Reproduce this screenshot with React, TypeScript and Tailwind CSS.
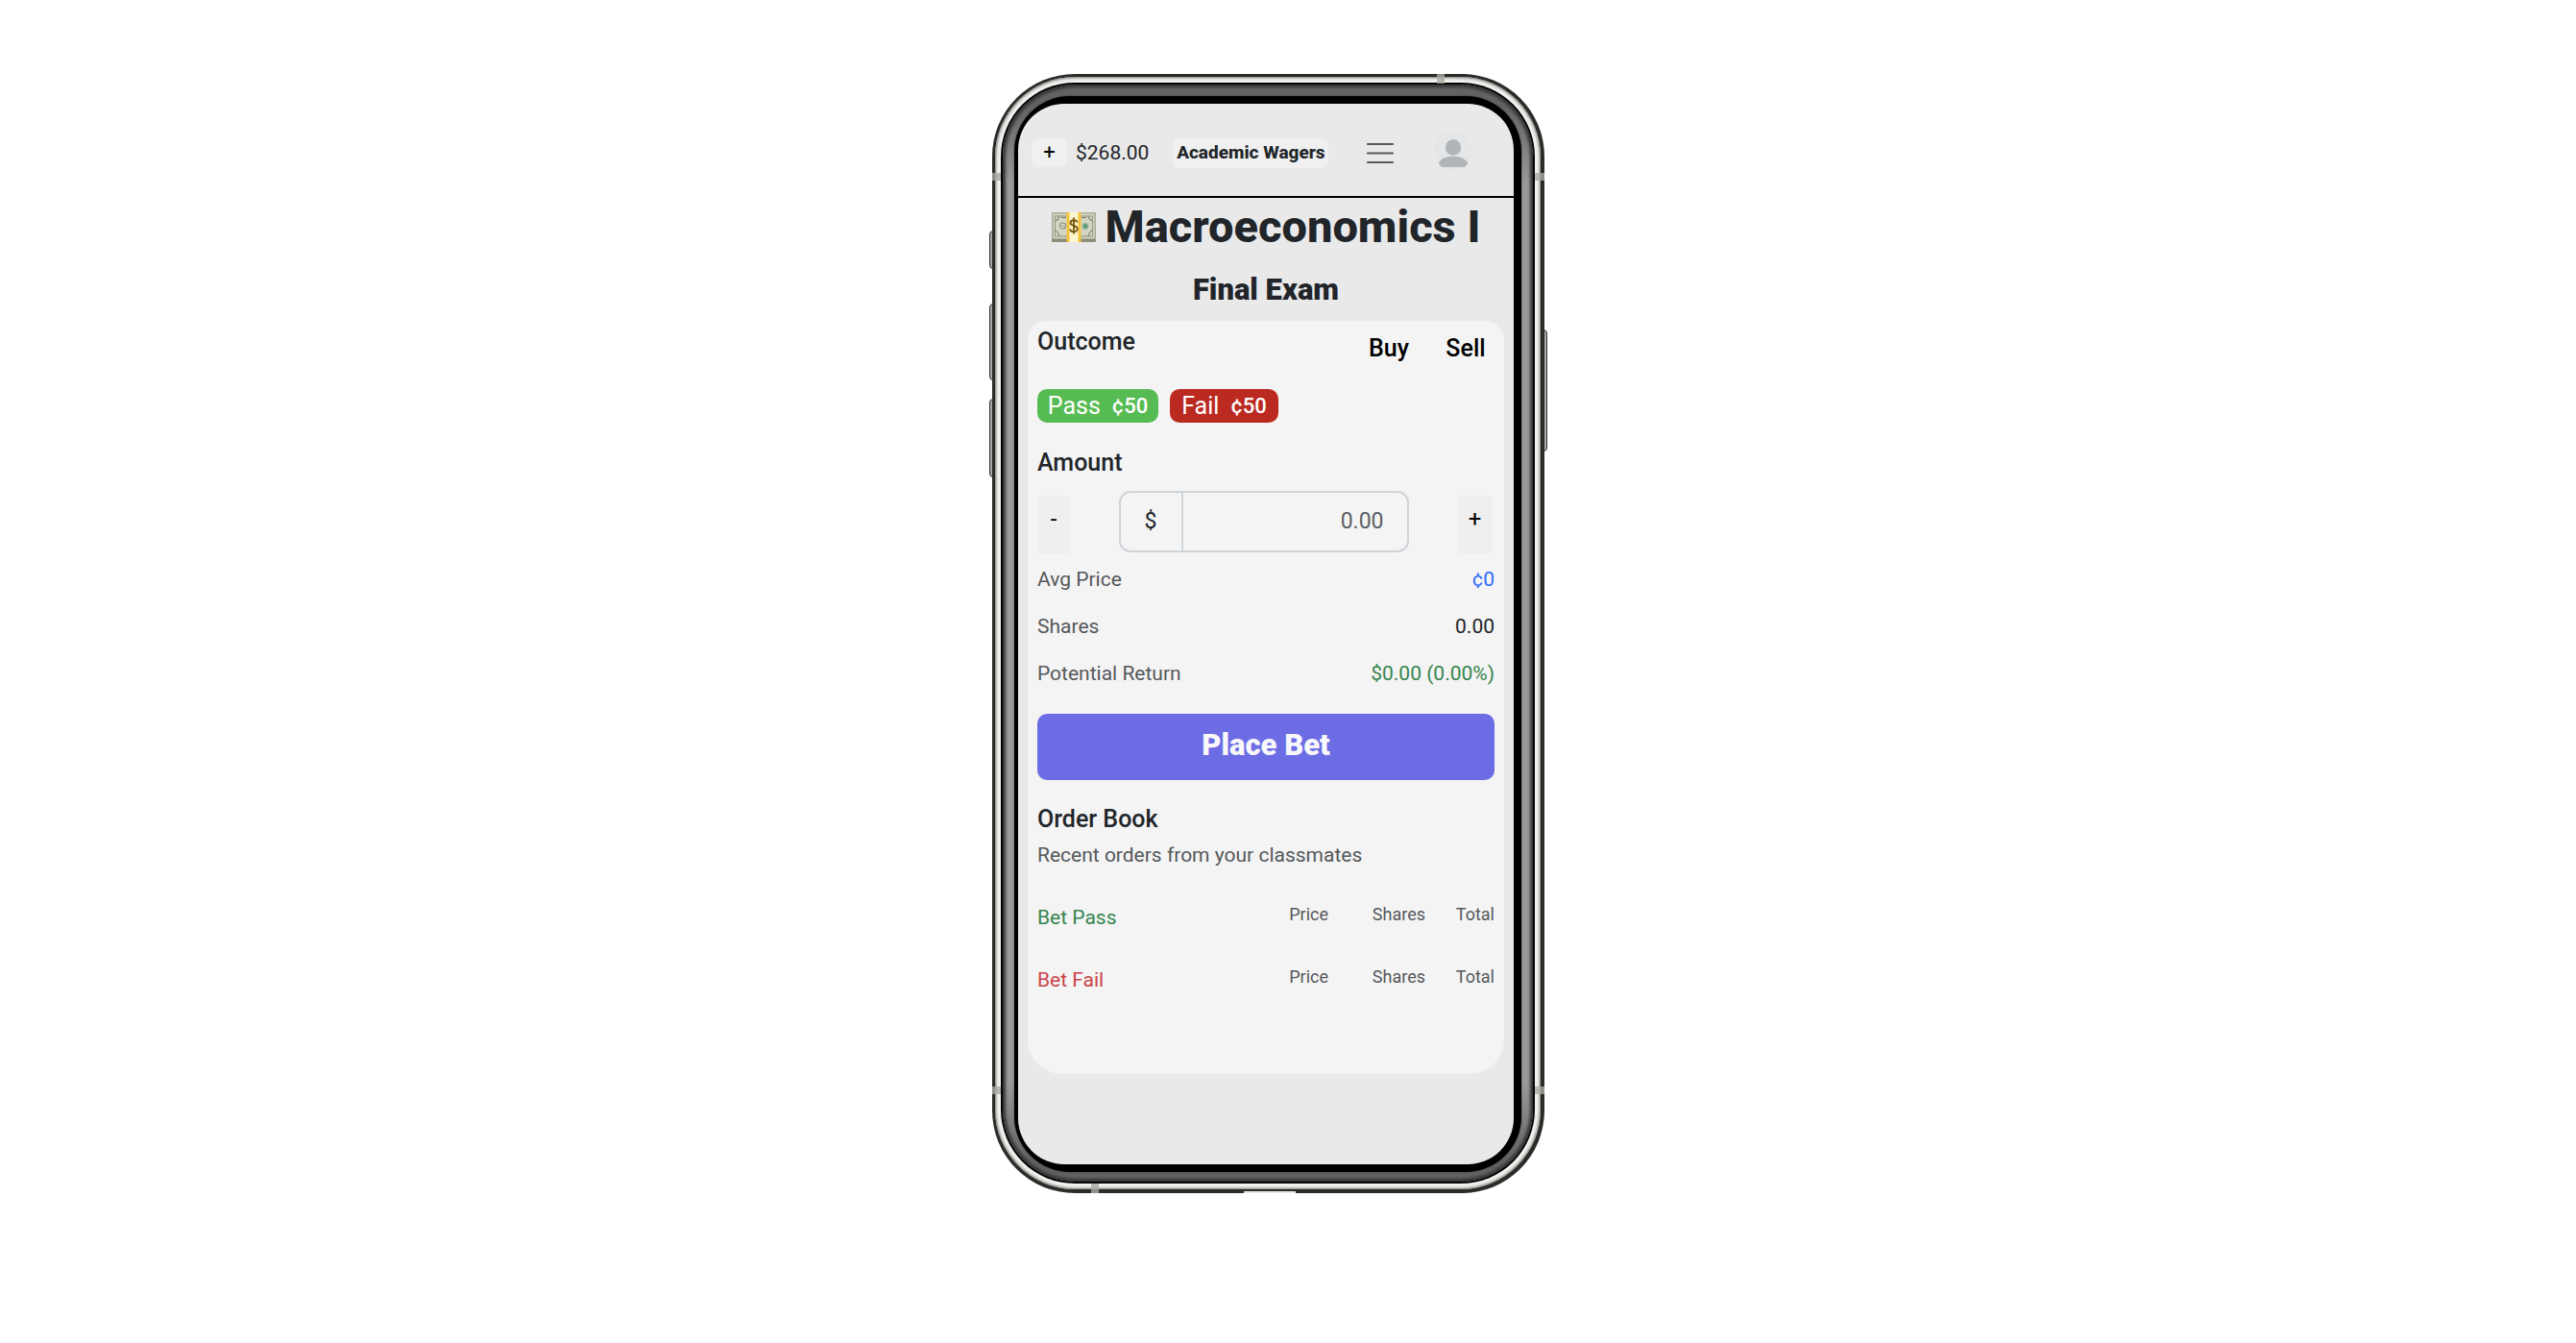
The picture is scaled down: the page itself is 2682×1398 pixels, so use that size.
import { useState } from "react";

function MoneyIcon() {
  return (
    <svg viewBox="0 0 46 31" className="h-[31px] w-[46px] shrink-0" aria-hidden="true">
      <rect x="0" y="2" width="46" height="29" rx="1" fill="#8b8d78" />
      <rect x="0" y="0" width="46" height="28" rx="1" fill="#a9aa98" />
      <rect x="1.5" y="1.5" width="43" height="25.500" fill="#d5d5c4" />
      <rect x="3.500" y="4" width="39" height="21" fill="none" stroke="#9b9d8b" strokeWidth="1.200" />
      <path d="M8 4 Q7 8 3.500 9 M8 25 Q7 20 3.500 19 M38 4 Q39 8 42.500 9 M38 25 Q39 20 42.500 19" fill="none" stroke="#85877a" strokeWidth="1.200" />
      <circle cx="11.500" cy="14" r="3" fill="#e4e4d8" stroke="#85877a" strokeWidth="1.200" />
      <circle cx="11.500" cy="14" r="1" fill="#85877a" />
      <circle cx="35" cy="14.500" r="3" fill="#5f9a79" stroke="#9fb9a4" strokeWidth="1.200" />
      <path d="M10 5.500 H15 M31 5.500 H36" stroke="#77796c" strokeWidth="1.200" />
      <rect x="15.500" y="0" width="15" height="31" fill="#f3c53c" />
      <rect x="18.500" y="0" width="9" height="31" fill="#fdf6cf" />
      <path d="M26.500 10.500 C26 7.500 19.500 7.300 19.500 11 C19.500 14.600 26.800 13.300 26.800 17.300 C26.800 21.200 19.300 21 19 17.300 M23 5.500 V22.500" fill="none" stroke="#7a5a12" strokeWidth="1.900" />
    </svg>
  );
}

function MenuIcon() {
  return (
    <svg viewBox="0 0 30 24" className="h-6 w-[30px]" aria-hidden="true">
      <path d="M2 3 H28 M2 12.500 H28 M2 22 H28" stroke="#58595b" strokeWidth="2.200" strokeLinecap="round" />
    </svg>
  );
}

function AvatarIcon() {
  return (
    <svg viewBox="0 0 40 40" className="size-10" aria-hidden="true">
      <circle cx="20" cy="20" r="20" fill="#e4e6e8" />
      <circle cx="20" cy="16.500" r="8.200" fill="#afb5b8" />
      <path d="M5 33 C6.500 28 13 25.800 20 25.800 C27 25.800 33.500 28 35 33 C34 35 32.500 37 31 37 H9 C7.500 37 6 35 5 33 Z" fill="#afb5b8" />
    </svg>
  );
}

const antennaBands = [
  "left-0 top-[103px] h-2 w-[9px]",
  "right-0 top-[103px] h-2 w-[10px]",
  "left-0 bottom-[103px] h-2 w-[9px]",
  "right-0 bottom-[103px] h-2 w-[10px]",
  "right-[104px] top-0 h-[10px] w-2",
  "left-[103px] bottom-0 h-[10px] w-2",
];

const sideButtons = [
  "-left-[3px] top-[163px] h-10 rounded-l-sm",
  "-left-[3px] top-[239px] h-20 rounded-l-sm",
  "-left-[3px] top-[338px] h-[82px] rounded-l-sm",
  "-right-[3px] top-[266px] h-[127px] rounded-r-sm",
];

function Phone({ children }: { children: React.ReactNode }) {
  return (
    <div className="relative w-[575px]">
      {sideButtons.map((c) => (
        <span key={c} className={`absolute w-[6px] border border-[#333] bg-[#a8a8a4] ${c}`} />
      ))}
      <div className="relative rounded-[86px] bg-[#2b2c2a] pt-[3px] pr-[4px] pb-[4px] pl-[3px]">
        <div className="rounded-[83px] bg-[#f1f1ef] px-[6px] py-[6px] shadow-[inset_0_0_3px_1px_#6f7069]">
          <div className="rounded-[77px] bg-[#050505] p-[2px]">
            <div className="rounded-[75px] bg-[linear-gradient(to_bottom,#636363_0%,#636363_2%,#9a9a9a_9%,#9a9a9a_91%,#636363_98%,#636363_100%)] pt-[13px] pr-[12px] pb-[11px] pl-[12px] shadow-[inset_0_0_3px_3px_#363636]">
              <div className="-mt-px -mb-px rounded-[58px] bg-black pt-[8px] pr-[8px] pb-[8px] pl-[4px] shadow-[0_0_2px_0_#333333]">
                {children}
              </div>
            </div>
          </div>
        </div>
      </div>
      {antennaBands.map((c) => (
        <span key={c} className={`absolute bg-[#a9aaa0]/80 ${c}`} />
      ))}
      <span className="absolute bottom-0 left-[262px] h-[2px] w-[54px] bg-[#e8e8e6]" />
    </div>
  );
}

function Stat({ label, value, tone }: { label: string; value: string; tone: string }) {
  return (
    <div className="flex h-[49px] items-center justify-between text-[21px] leading-6">
      <dt className="text-[#55585b]">{label}</dt>
      <dd className={tone}>{value}</dd>
    </div>
  );
}

function OrderRow({ label, tone }: { label: string; tone: string }) {
  return (
    <table className="mb-[35px] w-full table-fixed">
      <thead>
        <tr className="h-[30px] align-top text-right text-lg leading-6 text-[#55585b]">
          <th scope="col" className={`text-left text-[21px] leading-[30px] font-normal ${tone}`}>{label}</th>
          <th scope="col" className="w-[90px] font-normal">Price</th>
          <th scope="col" className="w-[101px] font-normal">Shares</th>
          <th scope="col" className="w-[72px] font-normal">Total</th>
        </tr>
      </thead>
    </table>
  );
}

export default function App() {
  const [amount, setAmount] = useState("");
  const step = (by: number) => setAmount(Math.max(0, Number(amount) + by).toFixed(2));

  return (
    <div className="flex min-h-screen items-start justify-center bg-white pt-[77px] pr-[41px] font-['Roboto',sans-serif] text-[#212529]">
      <Phone>
        <main className="min-h-[1104px] overflow-hidden rounded-[48px] bg-[#e9e9e9]">
          <header className="flex h-[98px] items-center border-b-2 border-black pt-[6px] pl-[14px]">
            <button aria-label="Add funds" className="flex h-[30px] w-[37px] items-center justify-center rounded-lg bg-[#f0f0f0] text-[22px] leading-6 text-black">+</button>
            <span className="ml-[9px] text-[21px] leading-6">$268.00</span>
            <a href="#home" className="ml-[25px] flex h-[31px] w-[162px] shrink-0 items-center justify-center rounded-md bg-[#f0f0f0] text-[19px] leading-6 font-extrabold whitespace-nowrap">Academic Wagers</a>
            <button aria-label="Menu" className="ml-[39px]"><MenuIcon /></button>
            <button aria-label="Account" className="mb-1 ml-[41px] shrink-0"><AvatarIcon /></button>
          </header>

          <h1 className="flex h-[60px] items-center justify-center gap-[10px] text-[47px] leading-[60px] font-extrabold whitespace-nowrap">
            <MoneyIcon />
            Macroeconomics I
          </h1>
          <h2 className="mt-4 text-center text-[31px] leading-10 font-black">Final Exam</h2>

          <section className="mx-[10px] mt-3 h-[784px] rounded-t-[20px] rounded-b-[36px] bg-[#f4f4f4] px-[10px]">
            <div className="flex h-[71px] justify-between text-[25px] leading-8 font-medium">
              <h3 className="pt-[6px]">Outcome</h3>
              <div className="-mr-[10px] flex items-start pt-[13px] text-black">
                <button className="w-20">Buy</button>
                <button className="w-20">Sell</button>
              </div>
            </div>

            <div className="flex gap-3 text-[25px] leading-8 text-white">
              <button className="flex h-[35px] w-[126px] items-center justify-center gap-3 rounded-[10px] bg-[#57bb54] pt-px">
                Pass <span className="text-[22px] font-medium">¢50</span>
              </button>
              <button className="flex h-[35px] w-[113px] items-center justify-center gap-3 rounded-[10px] bg-[#bb2a21] pt-px">
                Fail <span className="text-[22px] font-medium">¢50</span>
              </button>
            </div>

            <h3 className="mt-[26px] text-[25px] leading-8 font-medium">
              <label htmlFor="amount">Amount</label>
            </h3>

            <div className="mt-[13px] flex h-[66px] items-start justify-between text-black">
              <button aria-label="Decrease" onClick={() => step(-1)} className="mt-[5px] h-[60px] w-[34px] bg-[#efefef] pb-3 text-2xl leading-8">-</button>
              <div className="flex h-16 w-[302px] items-stretch overflow-hidden rounded-xl border-2 border-[#ced4da] text-[23px]">
                <span className="flex w-[65px] items-center justify-center border-r-2 border-[#ced4da] text-[#212529]">$</span>
                <input
                  id="amount"
                  value={amount}
                  onChange={(e) => setAmount(e.target.value)}
                  placeholder="0.00"
                  className="w-0 flex-1 bg-transparent pt-px pr-6 text-right outline-none placeholder:text-[#5c6064]"
                />
              </div>
              <button aria-label="Increase" onClick={() => step(1)} className="mt-[5px] mr-[2px] h-[60px] w-[37px] bg-[#efefef] pb-3 text-2xl leading-8">+</button>
            </div>

            <dl className="pt-px">
              <Stat label="Avg Price" value="¢0" tone="text-[#2f6df6]" />
              <Stat label="Shares" value="0.00" tone="text-[#212529]" />
              <Stat label="Potential Return" value="$0.00 (0.00%)" tone="text-[#36854f]" />
            </dl>

            <button className="mt-[18px] flex h-[69px] w-full items-center justify-center rounded-[10px] bg-[#6c6ce5] pb-[3px] text-[31px] leading-10 font-black text-[#f8f8fb]">
              Place Bet
            </button>

            <h3 className="mt-[25px] text-[25px] leading-8 font-medium">Order Book</h3>
            <p className="mt-[9px] mb-[38px] text-[21px] leading-6 text-[#55585b]">Recent orders from your classmates</p>
            <OrderRow label="Bet Pass" tone="text-[#36854f]" />
            <OrderRow label="Bet Fail" tone="text-[#cb444a]" />
          </section>
        </main>
      </Phone>
    </div>
  );
}
